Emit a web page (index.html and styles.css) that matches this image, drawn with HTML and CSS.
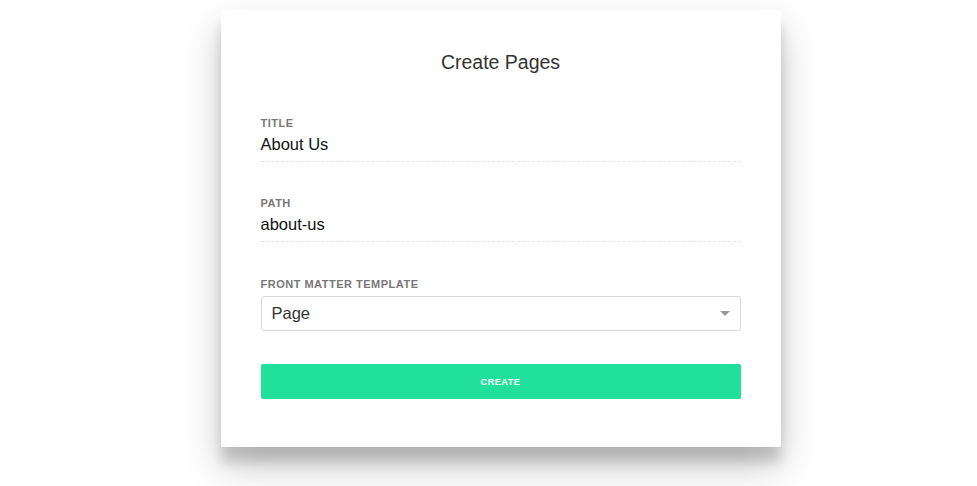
FILE: index.html
```html
<!DOCTYPE html>
<html>
<head>
<meta charset="utf-8">
<link rel="stylesheet" href="styles.css">
</head>
<body>
<div class="page">
  <div class="card">
    <h1 class="heading">Create Pages</h1>
    <div class="field">
      <label class="label">Title</label>
      <div class="input">About Us</div>
    </div>
    <div class="field field-path">
      <label class="label">Path</label>
      <div class="input">about-us</div>
    </div>
    <div class="field field-template">
      <label class="label">Front Matter Template</label>
      <div class="select"><span>Page</span><span class="caret"></span></div>
    </div>
    <button class="btn">Create</button>
  </div>
</div>
</body>
</html>
```
FILE: styles.css
```css
html, body {
  margin: 0;
  padding: 0;
  background: #fff;
  font-family: "Liberation Sans", Arial, sans-serif;
}
.page {
  display: flex;
  justify-content: center;
  padding-top: 10px;
  padding-left: 24px;
  min-height: 486px;
  box-sizing: border-box;
}
.card {
  width: 480px;
  height: 357px;
  padding: 40px;
  background: #fff;
  border-radius: 2px;
  box-shadow: 0 19px 38px rgba(0,0,0,0.22), 0 15px 12px rgba(0,0,0,0.14);
  display: flex;
  flex-direction: column;
}
.heading {
  margin: 0 0 42px;
  text-align: center;
  font-size: 19.5px;
  font-weight: normal;
  color: #333;
  line-height: 25px;
}
.field {
  display: flex;
  flex-direction: column;
  margin-bottom: 35px;
}
.field-path { margin-bottom: 36px; }
.field-template { margin-bottom: 33px; }
.label {
  font-size: 11px;
  font-weight: bold;
  text-transform: uppercase;
  letter-spacing: 0.5px;
  color: #777;
  line-height: 13px;
  margin-bottom: 3px;
}
.input {
  font-size: 16.5px;
  color: #111;
  line-height: 22px;
  padding-bottom: 6px;
  border-bottom: 1px dashed #e4e4e4;
}
.select {
  height: 33px;
  border: 1px solid #d8d8d8;
  border-radius: 3px;
  display: flex;
  align-items: center;
  justify-content: space-between;
  padding: 0 10px;
  font-size: 16.5px;
  color: #333;
  margin-top: 2px;
}
.caret {
  width: 0;
  height: 0;
  border-left: 5px solid transparent;
  border-right: 5px solid transparent;
  border-top: 5px solid #999;
}
.btn {
  height: 35px;
  border: none;
  border-radius: 2px;
  background: #21e09b;
  color: #fff;
  font-family: "Liberation Sans", Arial, sans-serif;
  font-size: 9px;
  font-weight: bold;
  letter-spacing: 0.6px;
  text-transform: uppercase;
  padding: 0;
}
```
